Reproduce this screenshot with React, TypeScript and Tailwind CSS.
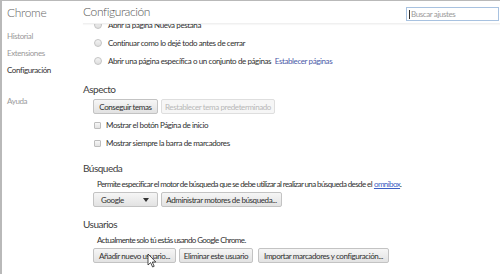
import React from "react";

const font = "font-['Lato','Liberation_Sans',sans-serif]";
const body = "text-[8px] tracking-[-0.4px] text-[#2f2f2f]";
const tight = "text-[8px] tracking-[-0.6px] text-[#2f2f2f]";

const Radio: React.FC<{ label: React.ReactNode }> = ({ label }) => (
  <div className="flex items-center h-[18px] pl-[11px]">
    <span className="w-[8px] h-[8px] rounded-full border border-[#c4c4c4] bg-gradient-to-b from-[#f4f4f4] to-[#dedede]" />
    <span className={`ml-[6px] ${body}`}>{label}</span>
  </div>
);

const Check: React.FC<{ label: string }> = ({ label }) => (
  <div className="flex items-center h-[18px] pl-[11px]">
    <span className="w-[7px] h-[7px] rounded-[1px] border border-[#bdbdbd] bg-gradient-to-b from-[#f7f7f7] to-[#e2e2e2]" />
    <span className={`ml-[5px] ${body}`}>{label}</span>
  </div>
);

const Btn: React.FC<{ children: React.ReactNode; disabled?: boolean; w: string }> = ({
  children,
  disabled,
  w,
}) => (
  <div
    className={`${w} h-[15px] flex items-center justify-center rounded-[2px] border text-[8px] tracking-[-0.4px] ${
      disabled
        ? "border-[#dedede] bg-[#f6f6f6] text-[#b8b8b8]"
        : "border-[#c3c3c3] bg-gradient-to-b from-[#f6f6f6] to-[#e2e2e2] text-[#2f2f2f]"
    }`}
  >
    {children}
  </div>
);

const Heading: React.FC<{ children: React.ReactNode }> = ({ children }) => (
  <div className="h-[16px] flex items-center text-[10px] tracking-[-0.5px] text-[#404040]">{children}</div>
);

export default function App() {
  return (
    <div
      className={`${font} relative w-[500px] h-[274px] overflow-hidden bg-white border-t border-l-2 border-[#b9b9b9] flex`}
    >
      {/* sidebar */}
      <div className="w-[81px] shrink-0 pl-[5px]">
        <div className="h-[23px] flex items-center text-[12px] font-light tracking-[-0.3px] text-[#666]">Chrome</div>
        <div className="mt-[3px] flex flex-col text-[8px] tracking-[-0.4px]">
          <div className="h-[17px] flex items-center text-[#9a9a9a]">Historial</div>
          <div className="h-[17px] flex items-center text-[#9a9a9a]">Extensiones</div>
          <div className="h-[18px] flex items-center text-[#2f2f2f]">Configuración</div>
          <div className="h-[31px] flex items-end pb-[3px] text-[#9a9a9a]">Ayuda</div>
        </div>
      </div>

      {/* main */}
      <div className="flex-1 flex flex-col">
        <div className="relative z-10 h-[23px] bg-white border-b border-[#f0f0f0] shadow-[0_1px_1px_rgba(0,0,0,0.03)] flex items-center justify-between pr-[1px]">
          <div className="text-[12px] font-light tracking-[-0.4px] text-[#555]">Configuración</div>
          <div className="w-[93px] h-[14px] mt-[4px] border border-[#a8c2e0] bg-white flex items-center pl-[2px] text-[8px] tracking-[-0.4px] text-[#9a9a9a]">
            <span className="w-px h-[9px] bg-[#333] mr-px" />
            Buscar ajustes
          </div>
        </div>

        <div className="-mt-[8px] flex flex-col">
          <Radio label="Abrir la página Nueva pestaña" />
          <Radio label="Continuar como lo dejé todo antes de cerrar" />
          <Radio
            label={
              <>
                Abrir una página específica o un conjunto de páginas{" "}
                <span className="ml-[2px] text-[#4b5aa8]">Establecer páginas</span>
              </>
            }
          />

          <div className="mt-[11px]">
            <Heading>Aspecto</Heading>
          </div>
          <div className="mt-[2px] pl-[10px] flex gap-[3px]">
            <Btn w="w-[65px]">Conseguir temas</Btn>
            <Btn w="w-[114px]" disabled>
              Restablecer tema predeterminado
            </Btn>
          </div>
          <div className="mt-[2px]">
            <Check label="Mostrar el botón Página de inicio" />
            <Check label="Mostrar siempre la barra de marcadores" />
          </div>

          <div className="mt-[8px]">
            <Heading>Búsqueda</Heading>
          </div>
          <div className={`pl-[14px] h-[16px] flex items-center ${tight}`}>
            Permite especificar el motor de búsqueda que se debe utilizar al realizar una búsqueda desde el{" "}
            <span className="ml-[2px] underline text-[#3d5fc4]">omnibox</span>.
          </div>
          <div className="pl-[10px] flex gap-[3px]">
            <div className="w-[65px] h-[15px] flex items-center justify-between pl-[7px] pr-[8px] rounded-[2px] border border-[#c3c3c3] bg-gradient-to-b from-[#f6f6f6] to-[#e2e2e2] text-[8px] tracking-[-0.4px] text-[#2f2f2f]">
              Google
              <span className="w-0 h-0 border-l-[3px] border-r-[3px] border-t-[4px] border-l-transparent border-r-transparent border-t-[#333]" />
            </div>
            <Btn w="w-[121px]">Administrar motores de búsqueda...</Btn>
          </div>

          <div className="mt-[9px]">
            <Heading>Usuarios</Heading>
          </div>
          <div className={`pl-[14px] h-[16px] flex items-center ${tight}`}>
            Actualmente solo tú estás usando Google Chrome.
          </div>
          <div className="pl-[10px] flex gap-[3px]">
            <Btn w="w-[83px]">Añadir nuevo usuario...</Btn>
            <Btn w="w-[74px]">Eliminar este usuario</Btn>
            <div className="ml-[2px]">
              <Btn w="w-[131px]">Importar marcadores y configuración...</Btn>
            </div>
          </div>
        </div>
      </div>

      {/* mouse pointer */}
      <svg className="absolute left-[145px] top-[252px]" width="10" height="15" viewBox="0 0 10 15">
        <path d="M1 1 L1 12 L3.6 9.6 L5.6 14 L7.2 13.3 L5.3 9 L8.8 9 Z" fill="#fff" stroke="#222" strokeWidth="0.8" strokeLinejoin="round" />
      </svg>
    </div>
  );
}
